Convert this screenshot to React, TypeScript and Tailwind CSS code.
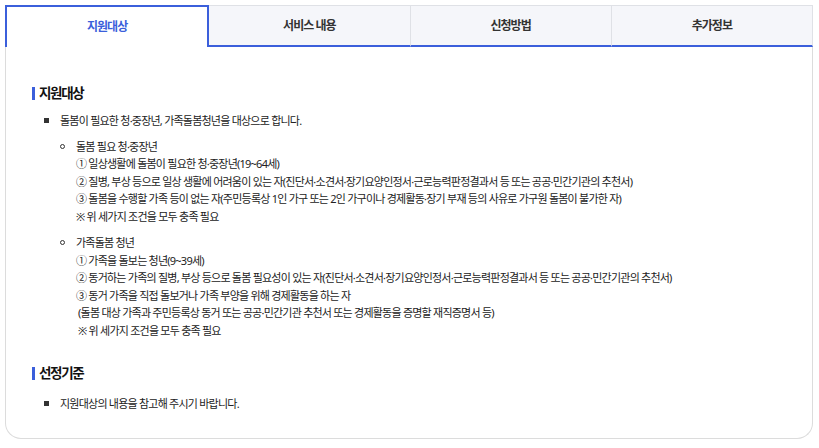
import React from "react";

const tabs = ["지원대상", "서비스 내용", "신청방법", "추가정보"];

function Heading({ children }: { children: React.ReactNode }) {
  return (
    <div className="flex items-center gap-[4px] pl-[26px]">
      <span className="w-[3px] h-[13px] bg-[#3b5fdb]" />
      <span className="text-[13.5px] font-bold text-[#111] leading-[20px] tracking-[-0.1em]">{children}</span>
    </div>
  );
}

function SubGroup({ title, lines }: { title: string; lines: string[] }) {
  return (
    <div className="flex pl-[54px]">
      <div className="w-[16px] pt-[6px]">
        <span className="block w-[5px] h-[5px] rounded-full border border-[#333]" />
      </div>
      <div className="flex flex-col">
        <div className="leading-[17.5px] whitespace-pre">{title}</div>
        {lines.map((l, i) => (
          <div key={i} className="leading-[17.5px] whitespace-pre">{l}</div>
        ))}
      </div>
    </div>
  );
}

export default function App() {
  return (
    <div
      className="w-[819px] h-[448px] bg-white p-[5px] pr-[6px] text-[11px] tracking-[-0.07em] text-[#222]"
      style={{ fontFamily: '"Noto Sans", "Noto Sans CJK KR", sans-serif' }}
    >
      <div className="flex h-[42px]">
        {tabs.map((t, i) =>
          i === 0 ? (
            <div
              key={t}
              className="flex-1 flex items-center justify-center border-t-2 border-l-2 border-r-2 border-[#3b5fdb] bg-white text-[12px] font-bold tracking-[-0.08em] text-[#3b5fdb]"
            >
              {t}
            </div>
          ) : (
            <div
              key={t}
              className="flex-1 flex items-center justify-center border-t border-[#dfe1e6] border-b-2 border-b-[#3b5fdb] border-r border-r-[#dfe1e6] bg-[#f5f6fa] text-[12px] font-semibold tracking-[-0.08em] text-[#333]"
            >
              {t}
            </div>
          )
        )}
      </div>
      <div className="h-[392px] border-l border-r border-b border-[#dcdcdc] rounded-b-[16px] pt-[36px]">
        <Heading>지원대상</Heading>
        <div className="flex items-center pl-[38px] mt-[9px] leading-[17.5px]">
          <span className="w-[5px] h-[5px] bg-[#333] mr-[11px]" />
          <span>돌봄이 필요한 청·중장년, 가족돌봄청년을 대상으로 합니다.</span>
        </div>
        <div className="mt-[8px]">
          <SubGroup
            title="돌봄 필요 청·중장년"
            lines={[
              "① 일상생활에 돌봄이 필요한 청·중장년(19~64세)",
              "② 질병, 부상 등으로 일상 생활에 어려움이 있는 자(진단서·소견서·장기요양인정서·근로능력판정결과서 등 또는 공공·민간기관의 추천서)",
              "③ 돌봄을 수행할 가족 등이 없는 자(주민등록상 1인 가구 또는 2인 가구이나 경제활동·장기 부재 등의 사유로 가구원 돌봄이 불가한 자)",
              "※ 위 세가지 조건을 모두 충족 필요",
            ]}
          />
        </div>
        <div className="mt-[9px]">
          <SubGroup
            title="가족돌봄 청년"
            lines={[
              "① 가족을 돌보는 청년(9~39세)",
              "② 동거하는 가족의 질병, 부상 등으로 돌봄 필요성이 있는 자(진단서·소견서·장기요양인정서·근로능력판정결과서 등 또는 공공·민간기관의 추천서)",
              "③ 동거 가족을 직접 돌보거나 가족 부양을 위해 경제활동을 하는 자",
              " (돌봄 대상 가족과 주민등록상 동거 또는 공공·민간기관 추천서 또는 경제활동을 증명할 재직증명서 등)",
              " ※ 위 세가지 조건을 모두 충족 필요",
            ]}
          />
        </div>
        <div className="mt-[24px]">
          <Heading>선정기준</Heading>
        </div>
        <div className="flex items-center pl-[38px] mt-[12px] leading-[17.5px]">
          <span className="w-[5px] h-[5px] bg-[#333] mr-[11px]" />
          <span>지원대상의 내용을 참고해 주시기 바랍니다.</span>
        </div>
      </div>
    </div>
  );
}
